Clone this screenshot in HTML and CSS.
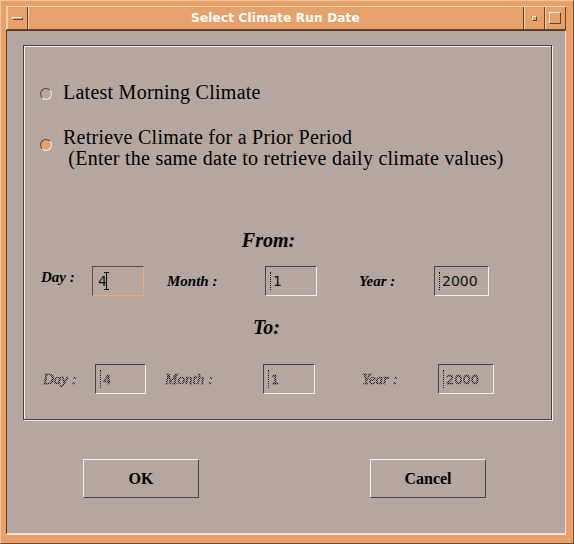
FILE: index.html
```html
<!DOCTYPE html>
<html>
<head>
<meta charset="utf-8">
<link rel="stylesheet" href="styles.css">
</head>
<body>
<div class="window">
  <div class="titlebar">
    <div class="tb-menu"><span class="menu-bar"></span></div>
    <div class="tb-title">Select Climate Run Date</div>
    <div class="tb-min"><span class="min-dot"></span></div>
    <div class="tb-max"><span class="max-box"></span></div>
  </div>
  <div class="content">
    <div class="panel">
      <div class="radio-row first">
        <span class="radio"></span>
        <span class="radio-label">Latest Morning Climate</span>
      </div>
      <div class="radio-row second">
        <span class="radio on"></span>
        <span class="radio-label">Retrieve Climate for a Prior Period<br>&nbsp;(Enter the same date to retrieve daily climate values)</span>
      </div>
      <div class="heading from">From:</div>
      <div class="date-row active">
        <span class="lbl lbl-day"><span class="t">Day :</span></span>
        <span class="field d focus"><span class="t">4</span><span class="ibeam"></span></span>
        <span class="lbl lbl-month"><span class="t">Month :</span></span>
        <span class="field m"><span class="caret"></span><span class="t">1</span></span>
        <span class="lbl lbl-year"><span class="t">Year :</span></span>
        <span class="field y"><span class="caret"></span><span class="t">2000</span></span>
      </div>
      <div class="heading to">To:</div>
      <div class="date-row disabled">
        <span class="lbl lbl-day"><span class="t">Day :</span></span>
        <span class="field d"><span class="caret"></span><span class="t">4</span></span>
        <span class="lbl lbl-month"><span class="t">Month :</span></span>
        <span class="field m"><span class="caret"></span><span class="t">1</span></span>
        <span class="lbl lbl-year"><span class="t">Year :</span></span>
        <span class="field y"><span class="caret"></span><span class="t">2000</span></span>
      </div>
    </div>
    <div class="buttons">
      <div class="btn">OK</div>
      <div class="btn">Cancel</div>
    </div>
  </div>
</div>
</body>
</html>
```

FILE: styles.css
```css
html, body {
  margin: 0;
  padding: 0;
  background: #e9a16c;
}
.window {
  box-sizing: border-box;
  width: 574px;
  height: 544px;
  background: #e9a16c;
  padding: 5px 7px 8px 5px;
  display: flex;
  flex-direction: column;
  border-left: 1px solid #f6c79c;
  border-top: 1px solid #f6c79c;
  border-right: 1px solid #7a4a2a;
  border-bottom: 1px solid #7a4a2a;
}
.titlebar {
  height: 22px;
  display: flex;
  border-top: 1px solid #fbd2ad;
  border-left: 1px solid #fbd2ad;
  border-bottom: 1px solid #6b4126;
}
.tb-menu, .tb-title, .tb-min, .tb-max {
  display: flex;
  align-items: center;
  justify-content: center;
  border-right: 1px solid #6b4126;
  box-shadow: inset 1px 0 0 #fbd2ad;
}
.tb-menu { width: 20px; }
.menu-bar {
  width: 11px;
  height: 3px;
  border: 1px solid #fff3e4;
  border-right-color: #6b4126;
  border-bottom-color: #6b4126;
  box-sizing: border-box;
}
.tb-title {
  flex: 1;
  color: #ffffff;
  font-family: "DejaVu Sans", sans-serif;
  font-weight: bold;
  font-size: 12px;
  letter-spacing: 0.2px;
}
.tb-min { width: 20px; }
.min-dot {
  width: 3px;
  height: 3px;
  border: 1px solid #6b4126;
  border-top-color: #fff3e4;
  border-left-color: #fff3e4;
}
.tb-max { width: 20px; }
.max-box {
  width: 10px;
  height: 10px;
  border: 1px solid #6b4126;
  border-top-color: #fff3e4;
  border-left-color: #fff3e4;
}
.content {
  flex: 1;
  background: #b5a6a0;
  border-left: 1px solid #5a3a24;
  border-top: 1px solid #5a3a24;
  border-right: 1px solid #fde6d2;
  border-bottom: 2px solid #fde6d2;
  padding: 14px 13px 0 16px;
  display: flex;
  flex-direction: column;
}
.panel {
  height: 375px;
  box-sizing: border-box;
  border: 1px solid #4a4040;
  box-shadow: 1px 1px 0 #f4eeea, inset 1px 1px 0 #f4eeea;
  font-family: "Liberation Serif", "Times New Roman", serif;
  color: #000;
}
.radio-row {
  display: flex;
  align-items: flex-start;
  padding-left: 16px;
}
.radio-row.first { margin-top: 36px; }
.radio-row.second { margin-top: 24px; }
.radio {
  width: 12px;
  height: 12px;
  border-radius: 50%;
  box-sizing: border-box;
  border: 1px solid #f2ece8;
  border-top-color: #5a4a48;
  border-left-color: #5a4a48;
  margin-top: 6px;
  margin-right: 11px;
  flex: none;
}
.radio.on {
  background: #e9a16c;
  margin-top: 12px;
}
.radio-label {
  font-size: 20px;
  line-height: 21px;
  letter-spacing: 0.25px;
}
.heading {
  font-weight: bold;
  font-style: italic;
  font-size: 20px;
  text-align: center;
  padding-right: 38px;
}
.heading.from { margin-top: 60px; line-height: 22px; }
.heading.to { margin-top: 21px; line-height: 20px; padding-right: 42px; }
.date-row {
  display: flex;
  align-items: center;
  height: 30px;
}
.date-row.active { margin-top: 15px; }
.date-row.disabled { margin-top: 27px; }
.lbl {
  font-weight: bold;
  font-style: italic;
  font-size: 15px;
  flex: none;
  box-sizing: border-box;
}
.field {
  box-sizing: border-box;
  height: 30px;
  border: 1px solid #4e4646;
  border-right-color: #f2ece8;
  border-bottom-color: #f2ece8;
  display: flex;
  align-items: center;
  padding-left: 3px;
  font-family: "DejaVu Sans", sans-serif;
  font-size: 14px;
  color: #111;
  flex: none;
}
.field.focus {
  border: 1px solid #f4a868;
  border-top-color: #6a4a3a;
  border-left-color: #6a4a3a;
  padding-left: 5px;
}
.caret {
  width: 3px;
  height: 18px;
  box-sizing: border-box;
  border-left: 1px dotted #000;
  margin-left: 1px;
}
.ibeam {
  width: 5px;
  height: 18px;
  box-sizing: border-box;
  margin-left: -3px;
  border-top: 1px solid #000;
  border-bottom: 1px solid #000;
  background: linear-gradient(#000, #000) center / 1px 100% no-repeat;
}

/* row 1 geometry */
.active .lbl-day { margin-left: 17px; width: 51px; margin-top: -8px; }
.active .field.d { width: 52px; }
.active .lbl-month { margin-left: 23px; width: 98px; }
.active .field.m { width: 52px; }
.active .lbl-year { margin-left: 42px; width: 75px; }
.active .field.y { width: 55px; }

/* row 2 geometry */
.disabled .lbl-day { margin-left: 19px; width: 52px; }
.disabled .field.d { width: 51px; }
.disabled .lbl-month { margin-left: 19px; width: 98px; }
.disabled .field.m { width: 52px; }
.disabled .lbl-year { margin-left: 47px; width: 76px; }
.disabled .field.y { width: 56px; }

.disabled .t {
  color: transparent;
  font-weight: normal;
  background: repeating-conic-gradient(#1a1414 0 25%, transparent 0 50%) 0 0 / 2px 2px;
  -webkit-background-clip: text;
  background-clip: text;
  -webkit-text-stroke: 0.4px rgba(40, 30, 30, 0.35);
}
.disabled .field .t { font-size: 13px; }
.disabled .caret { border-left-color: #2a2020; }

.buttons {
  display: flex;
  justify-content: space-between;
  padding: 0 66px 0 60px;
  margin-top: 39px;
}
.btn {
  box-sizing: border-box;
  width: 116px;
  height: 39px;
  border: 1px solid #f4eeea;
  border-right-color: #4e4646;
  border-bottom-color: #4e4646;
  display: flex;
  align-items: center;
  justify-content: center;
  font-family: "Liberation Serif", serif;
  font-weight: bold;
  font-size: 16px;
}
```
